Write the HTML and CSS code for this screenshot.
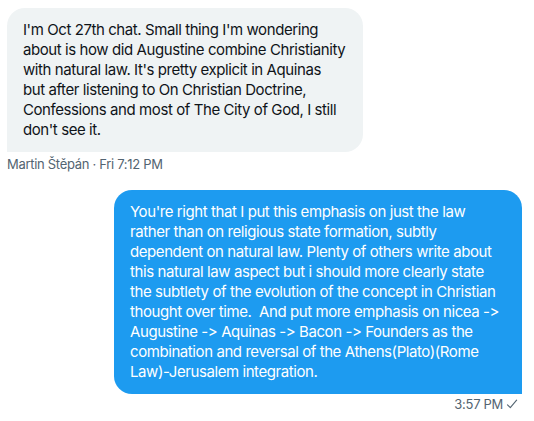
FILE: index.html
```html
<!DOCTYPE html>
<html lang="en">
<head>
<meta charset="utf-8">
<title>Messages</title>
<link rel="stylesheet" href="styles.css">
</head>
<body>
<div class="chat">
  <div class="msg msg-in">
    <div class="bubble bubble-in">I'm Oct 27th chat. Small thing I'm wondering<br>about is how did Augustine combine Christianity<br>with natural law. It's pretty explicit in Aquinas<br>but after listening to On Christian Doctrine,<br>Confessions and most of The City of God, I still<br>don't see it.</div>
    <div class="meta meta-in">Martin Štěpán · Fri 7:12 PM</div>
  </div>
  <div class="msg msg-out">
    <div class="bubble bubble-out">You're right that I put this emphasis on just the law<br>rather than on religious state formation, subtly<br>dependent on natural law. Plenty of others write about<br>this natural law aspect but i should more clearly state<br>the subtlety of the evolution of the concept in Christian<br>thought over time.&nbsp; And put more emphasis on nicea -&gt;<br>Augustine -&gt; Aquinas -&gt; Bacon -&gt; Founders as the<br>combination and reversal of the Athens(Plato)(Rome<br>Law)-Jerusalem integration.</div>
    <div class="meta meta-out">3:57 PM <svg class="check" viewBox="0 0 12 12" width="12" height="12" aria-hidden="true"><path d="M1.5 6.8 L4.3 9.6 L10.6 2.2" fill="none" stroke="#536471" stroke-width="1.1" stroke-linecap="round" stroke-linejoin="round"/></svg></div>
  </div>
</div>
</body>
</html>
```
FILE: styles.css
```css
html, body {
  margin: 0;
  padding: 0;
  background: #ffffff;
}
body {
  font-family: Inter, "Noto Sans", "Liberation Sans", sans-serif;
  color: #0f1419;
}
.chat {
  display: flex;
  flex-direction: column;
  padding: 8px 12px 0 7px;
}
.msg {
  display: flex;
  flex-direction: column;
}
.msg-in {
  align-items: flex-start;
}
.msg-out {
  align-items: flex-end;
  margin-top: 18px;
}
.bubble {
  box-sizing: border-box;
  padding: 12px 16px;
  font-size: 15px;
  line-height: 20px;
  white-space: nowrap;
  letter-spacing: -0.42px;
}
.bubble-in {
  width: 356px;
  background: #eff3f4;
  color: #0f1419;
  border-radius: 18px 18px 18px 0;
}
.bubble-out {
  width: 408px;
  background: #1d9bf0;
  color: #ffffff;
  border-radius: 18px 18px 0 18px;
}
.meta {
  font-size: 13px;
  line-height: 16px;
  color: #536471;
  margin-top: 4px;
  display: flex;
  align-items: center;
  letter-spacing: -0.3px;
}
.meta-out {
  margin-top: 2px;
  margin-right: 4px;
  gap: 3px;
}
.check {
  display: block;
}
```
